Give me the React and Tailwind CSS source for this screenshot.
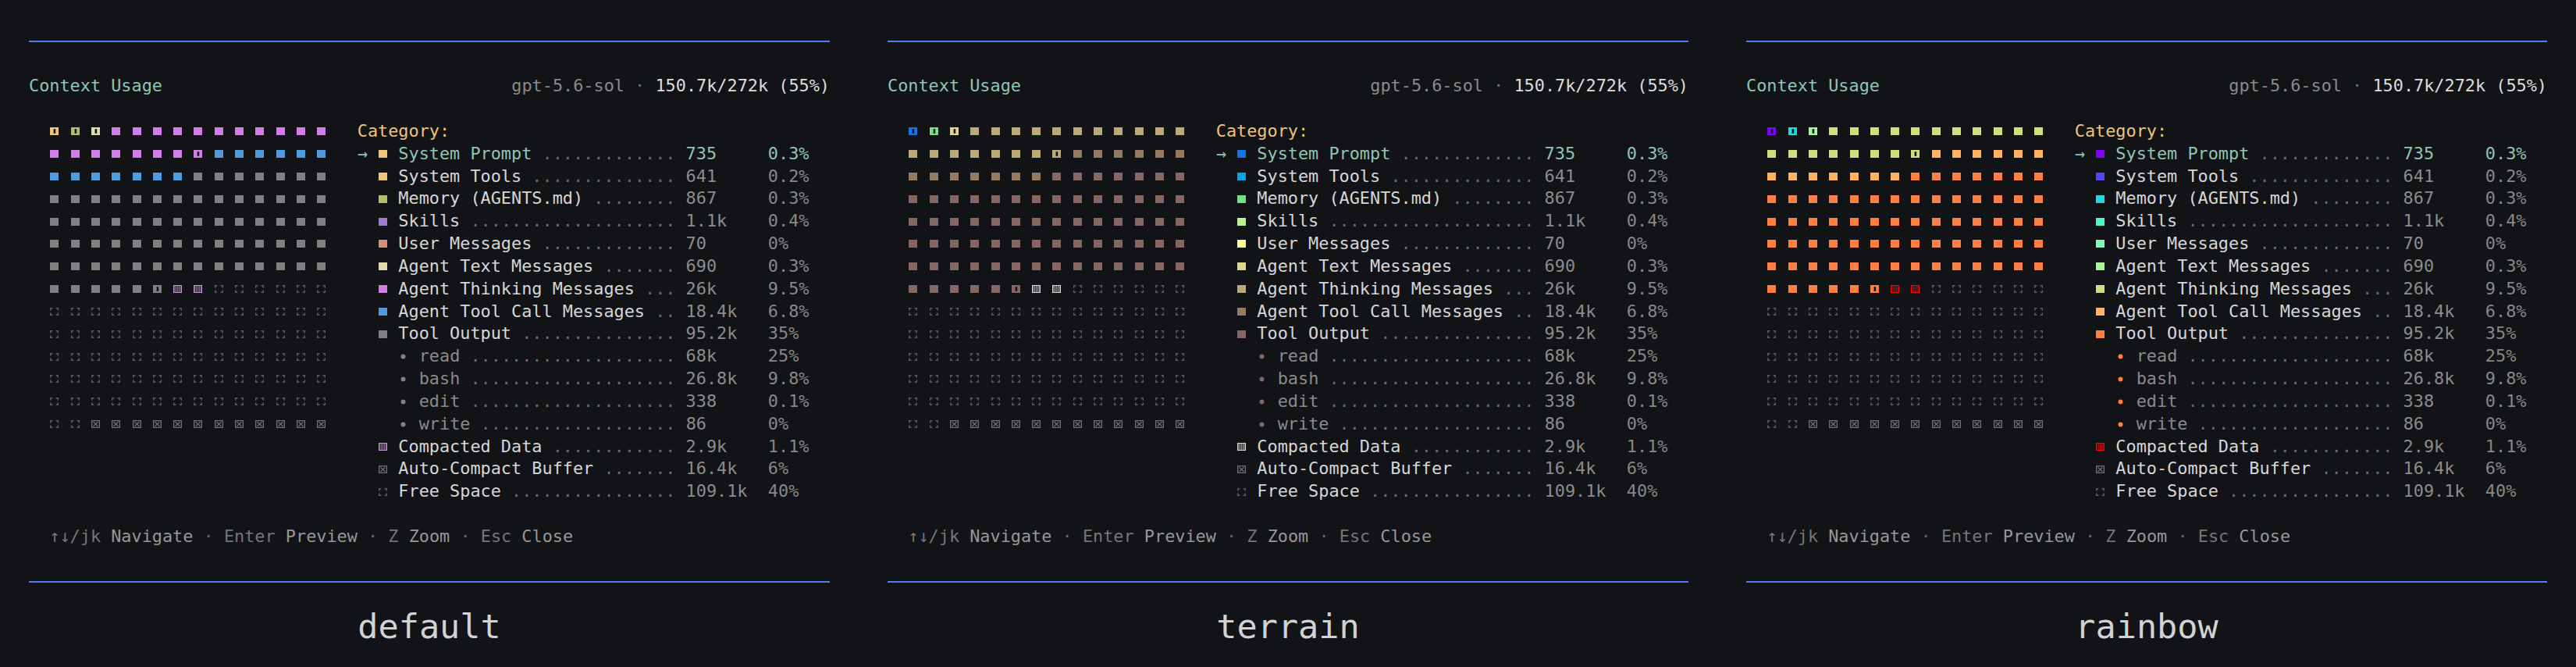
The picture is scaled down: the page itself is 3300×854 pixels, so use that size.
import React from 'react'

const BG = '#121316'

const THEMES = [
  {
    name: 'default',
    c: {
      sys: '#f0c674',
      tools: '#f0c674',
      mem: '#b5bd68',
      skills: '#9a7fd2',
      user: '#d28f77',
      text: '#dedcaa',
      think: '#d07fe6',
      call: '#4f9bdc',
      out: '#808080',
      bullet: '#808080',
      compact: '#c096d0',
    },
  },
  {
    name: 'terrain',
    c: {
      sys: '#1273e6',
      tools: '#03a4e8',
      mem: '#72e07e',
      skills: '#b9f38c',
      user: '#fdfd9c',
      text: '#ded88a',
      think: '#bba97a',
      call: '#957a61',
      out: '#846662',
      bullet: '#846662',
      compact: '#ddd6d4',
    },
  },
  {
    name: 'rainbow',
    c: {
      sys: '#7f00ff',
      tools: '#5048f6',
      mem: '#22d8de',
      skills: '#4ff3c8',
      user: '#7ffcb4',
      text: '#a8f59a',
      think: '#d3dd7e',
      call: '#ffb25f',
      out: '#ff7e42',
      bullet: '#ff7e42',
      compact: '#ff0000',
    },
  },
]

const ROWS = [
  { key: 'sys', label: 'System Prompt', value: '735', pct: '0.3%' },
  { key: 'tools', label: 'System Tools', value: '641', pct: '0.2%' },
  { key: 'mem', label: 'Memory (AGENTS.md)', value: '867', pct: '0.3%' },
  { key: 'skills', label: 'Skills', value: '1.1k', pct: '0.4%' },
  { key: 'user', label: 'User Messages', value: '70', pct: '0%' },
  { key: 'text', label: 'Agent Text Messages', value: '690', pct: '0.3%' },
  { key: 'think', label: 'Agent Thinking Messages', value: '26k', pct: '9.5%' },
  { key: 'call', label: 'Agent Tool Call Messages', value: '18.4k', pct: '6.8%' },
  { key: 'out', label: 'Tool Output', value: '95.2k', pct: '35%' },
  { key: 'out', sub: true, label: 'read', value: '68k', pct: '25%' },
  { key: 'out', sub: true, label: 'bash', value: '26.8k', pct: '9.8%' },
  { key: 'out', sub: true, label: 'edit', value: '338', pct: '0.1%' },
  { key: 'out', sub: true, label: 'write', value: '86', pct: '0%' },
  { key: 'compact', kind: 'compact', label: 'Compacted Data', value: '2.9k', pct: '1.1%' },
  { key: 'auto', kind: 'auto', label: 'Auto-Compact Buffer', value: '16.4k', pct: '6%' },
  { key: 'free', kind: 'free', label: 'Free Space', value: '109.1k', pct: '40%' },
]

// 14 x 14 usage grid, same split for every theme
const rep = (n, cell) => Array.from({ length: n }, () => cell)
const CELLS = [
  ['part', 'sys'],
  ['part', 'mem'],
  ['part', 'text'],
  ...rep(18, ['full', 'think']),
  ['part', 'think'],
  ...rep(13, ['full', 'call']),
  ...rep(68, ['full', 'out']),
  ['part', 'out'],
  ...rep(2, ['compact', 'compact']),
  ...rep(78, ['free', 'free']),
  ...rep(12, ['auto', 'auto']),
]
const GRID = Array.from({ length: 14 }, (_, r) => CELLS.slice(r * 14, r * 14 + 14))

function Glyph({ kind, color }) {
  return (
    <span className="flex h-[28.83px] w-[13.15px] items-center justify-center">
      <svg width="11" height="10" viewBox="0 0 11 10">
        {kind === 'full' && <rect width="11" height="10" fill={color} />}
        {kind === 'part' && (
          <>
            <rect width="11" height="10" fill={color} />
            <rect x="4.6" y="2.2" width="2.6" height="5.6" fill={BG} />
          </>
        )}
        {kind === 'compact' && (
          <>
            <rect width="11" height="10" fill={color} />
            {[2.2, 4.4, 6.6, 8.8].map((x) => (
              <rect key={'v' + x} x={x - 0.35} y="1" width="0.7" height="8" fill={BG} />
            ))}
            {[2, 4, 6, 8].map((y) => (
              <rect key={'h' + y} x="1" y={y - 0.35} width="9" height="0.7" fill={BG} />
            ))}
          </>
        )}
        {kind === 'auto' && (
          <g stroke="#6f6f6f" strokeWidth="1.3" fill="none">
            <rect x="0.65" y="0.65" width="9.7" height="8.7" />
            <path d="M2.5 2.3 L8.5 7.7 M8.5 2.3 L2.5 7.7" />
          </g>
        )}
        {kind === 'free' && (
          <path
            d="M0.75 3.4 V0.75 H3.4 M7.6 0.75 H10.25 V3.4 M10.25 6.6 V9.25 H7.6 M3.4 9.25 H0.75 V6.6"
            stroke="#5c5c5c"
            strokeWidth="1.5"
            fill="none"
          />
        )}
      </svg>
    </span>
  )
}

function Rule() {
  return (
    <div className="flex h-[28.83px] items-center">
      <div className="h-[2px] w-full bg-[#5379ef]" />
    </div>
  )
}

const Blank = () => <div className="h-[28.83px]" />

function LegendRow({ row, c, selected }) {
  // label column ends at char 32 of the legend (value column)
  const width = row.sub ? 26 : 28
  const dots = ' ' + '.'.repeat(width - row.label.length - 2) + ' '
  const teal = 'text-[#8ec5b3]'

  return (
    <div className="flex h-[28.83px] items-center whitespace-pre">
      <span className={teal}>{selected ? '→' : ' '}</span>
      <span> </span>
      {row.sub ? <span> </span> : <Glyph kind={row.kind || 'full'} color={c[row.key]} />}
      <span> </span>
      {row.sub && (
        <>
          <span className="flex w-[13.15px] justify-center">
            <svg width="7" height="7" viewBox="0 0 7 7">
              <circle cx="3.5" cy="3.5" r="3" fill={c.bullet} />
            </svg>
          </span>
          <span> </span>
        </>
      )}
      <span className={selected ? teal : row.sub ? 'text-[#8a8a8a]' : 'text-[#d6d6d6]'}>{row.label}</span>
      <span className="text-[#6c6c6c]">{dots}</span>
      <span className={selected ? teal : 'text-[#8c8c8c]'}>{row.value.padEnd(8)}</span>
      <span className={selected ? teal : 'text-[#878787]'}>{row.pct}</span>
    </div>
  )
}

function Legend({ c }) {
  return (
    <div className="flex flex-col">
      <div className="flex h-[28.83px] items-center text-[#f0c27b]">Category:</div>
      {ROWS.map((row, i) => (
        <LegendRow key={i} row={row} c={c} selected={i === 0} />
      ))}
    </div>
  )
}

function Grid({ c }) {
  return (
    <div className="flex flex-col">
      {GRID.map((cells, r) => (
        <div key={r} className="flex">
          {cells.map(([kind, key], i) => (
            <span key={i} className="flex w-[26.3px]">
              <Glyph kind={kind} color={c[key]} />
            </span>
          ))}
        </div>
      ))}
    </div>
  )
}

function Panel({ theme }) {
  const { c } = theme
  return (
    <div className="flex w-[1100px] flex-col">
      <div className="ml-[37px] w-[1026px] text-[21.85px] text-[#d6d6d6]">
        <Rule />
        <Blank />
        <div className="flex h-[28.83px] items-center justify-between whitespace-pre">
          <span className="text-[#8ec5b3]">Context Usage</span>
          <span>
            <span className="text-[#8a8a8a]">gpt-5.6-sol</span>
            <span className="text-[#6e6e6e]"> · </span>
            <span className="text-[#dcdcdc]">150.7k/272k (55%)</span>
          </span>
        </div>
        <Blank />
        <div className="flex">
          <div className="w-[26.3px]" />
          <Grid c={c} />
          <div className="w-[26.3px]" />
          <Legend c={c} />
        </div>
        <Blank />
        <div className="flex h-[28.83px] items-center whitespace-pre pl-[26.3px]">
          <span className="text-[#767676]">↑↓/jk</span>
          <span className="text-[#979797]"> Navigate</span>
          <span className="text-[#666666]"> · </span>
          <span className="text-[#767676]">Enter</span>
          <span className="text-[#979797]"> Preview</span>
          <span className="text-[#666666]"> · </span>
          <span className="text-[#767676]">Z</span>
          <span className="text-[#979797]"> Zoom</span>
          <span className="text-[#666666]"> · </span>
          <span className="text-[#767676]">Esc</span>
          <span className="text-[#979797]"> Close</span>
        </div>
        <Blank />
        <Rule />
      </div>
      <div className="mt-[17.6px] text-center text-[43.5px] leading-[50px] text-[#d2d2d2]">{theme.name}</div>
    </div>
  )
}

export default function App() {
  return (
    <div className="flex h-[854px] w-[3300px] bg-[#121316] pt-[38.6px] font-['DejaVu_Sans_Mono',monospace]">
      {THEMES.map((t) => (
        <Panel key={t.name} theme={t} />
      ))}
    </div>
  )
}
